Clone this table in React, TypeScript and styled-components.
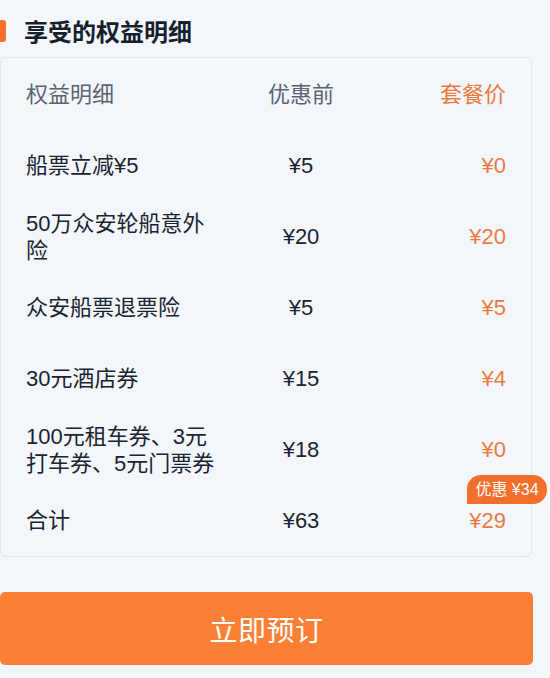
import React from "react";
import styled, { createGlobalStyle } from "styled-components";

const GlobalStyle = createGlobalStyle`
  html, body {
    margin: 0;
    padding: 0;
    background: #f3f7fc;
  }
  body {
    font-family: "Liberation Sans", "Noto Sans CJK SC", sans-serif;
    color: #1b2330;
  }
`;

const Page = styled.div`
  width: 532px;
  display: flex;
  flex-direction: column;
  background: #f3f7fc;
  min-height: 678px;
`;

const TitleRow = styled.div`
  display: flex;
  align-items: center;
  gap: 18px;
  height: 57px;
  padding-top: 5px;
  box-sizing: border-box;
`;

const TitleBar = styled.span`
  width: 6px;
  height: 22px;
  background: #fb6f2a;
  border-radius: 0 3px 3px 0;
`;

const Title = styled.h2`
  margin: 0;
  font-size: 24px;
  line-height: 28px;
  font-weight: 700;
  color: #161f2c;
  font-family: "Noto Sans CJK SC", sans-serif;
`;

const Card = styled.div`
  box-sizing: border-box;
  width: 532px;
  border: 1px solid #e2e6eb;
  border-radius: 6px;
  background: #f3f7fc;
  padding: 1px 25px 0 25px;
  display: flex;
  flex-direction: column;
`;

const Row = styled.div`
  display: grid;
  grid-template-columns: 200px 150px 1fr;
  align-items: center;
  height: 71px;
  font-size: 22px;
  line-height: 27px;
  position: relative;
`;

const Cell = styled.div<{ $align?: "left" | "center" | "right"; $tone?: "head" | "body" | "price" }>`
  text-align: ${(p) => p.$align || "left"};
  color: ${(p) =>
    p.$tone === "head" ? "#5b6370" : p.$tone === "price" ? "#ec7a3e" : "#1b2330"};
`;

const PriceCell = styled(Cell)`
  position: relative;
`;

const Badge = styled.span`
  position: absolute;
  right: -41px;
  top: -10px;
  height: 29px;
  width: 80px;
  box-sizing: border-box;
  background: #f3702c;
  color: #ffffff;
  font-size: 16px;
  line-height: 29px;
  text-align: center;
  border-radius: 14px 14px 14px 0;
  white-space: nowrap;
`;

const BookButton = styled.button`
  margin-top: 35px;
  width: 533px;
  height: 73px;
  border: none;
  border-radius: 5px;
  background: #fb7f34;
  color: #ffffff;
  font-size: 28px;
  font-family: "Noto Sans CJK SC", sans-serif;
  letter-spacing: 0.5px;
  cursor: pointer;
`;

const rows = [
  { name: "船票立减¥5", before: "¥5", price: "¥0" },
  { name: "50万众安轮船意外险", before: "¥20", price: "¥20" },
  { name: "众安船票退票险", before: "¥5", price: "¥5" },
  { name: "30元酒店券", before: "¥15", price: "¥4" },
  { name: "100元租车券、3元打车券、5元门票券", before: "¥18", price: "¥0" },
];

export default function App() {
  return (
    <>
      <GlobalStyle />
      <Page>
        <TitleRow>
          <TitleBar />
          <Title>享受的权益明细</Title>
        </TitleRow>
        <Card>
          <Row>
            <Cell $tone="head">权益明细</Cell>
            <Cell $tone="head" $align="center">优惠前</Cell>
            <Cell $tone="price" $align="right">套餐价</Cell>
          </Row>
          {rows.map((r) => (
            <Row key={r.name}>
              <Cell>{r.name}</Cell>
              <Cell $align="center">{r.before}</Cell>
              <Cell $tone="price" $align="right">{r.price}</Cell>
            </Row>
          ))}
          <Row>
            <Cell>合计</Cell>
            <Cell $align="center">¥63</Cell>
            <PriceCell $tone="price" $align="right">
              ¥29
            </PriceCell>
            <Badge>优惠 ¥34</Badge>
          </Row>
        </Card>
        <BookButton>立即预订</BookButton>
      </Page>
    </>
  );
}
